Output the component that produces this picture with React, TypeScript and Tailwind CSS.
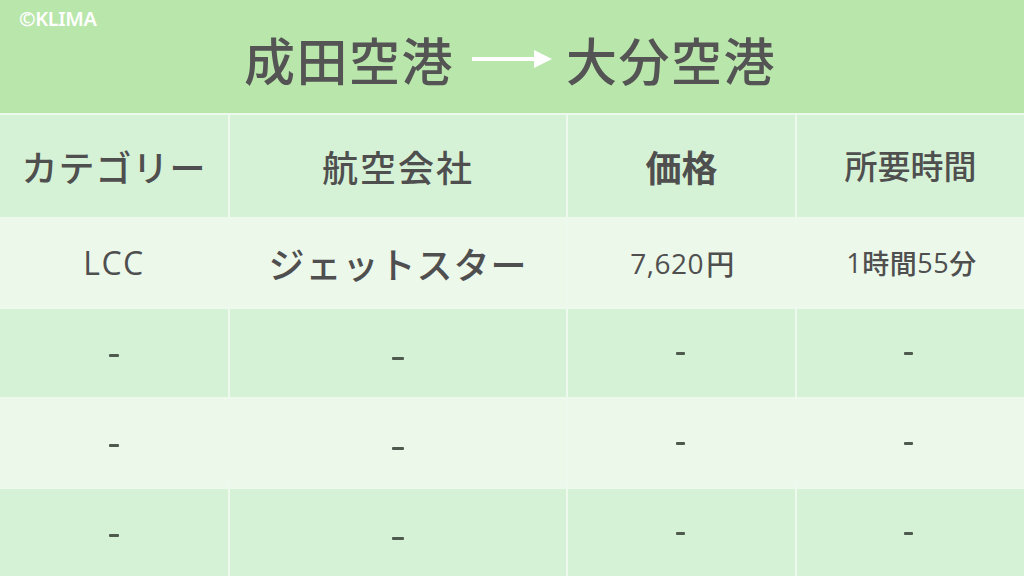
import React from "react";

const FONT = { fontFamily: '"Noto Sans CJK JP", "Noto Sans", sans-serif' };
const LATIN = { fontFamily: '"Open Sans", "Noto Sans CJK JP", sans-serif' };

function Cell({ children, bg, className = "" }: { children?: React.ReactNode; bg: string; className?: string }) {
  return (
    <div className={`flex items-center justify-center text-[#4f4f4f] ${bg} ${className}`}>{children}</div>
  );
}

function Dash({ w }: { w: string }) {
  return <div className={`h-[3px] ${w} bg-[#4f5a4f] rounded-[1px]`} />;
}

export default function App() {
  const head = "bg-[#d6f2d6]";
  const light = "bg-[#ecf8ea]";
  const rows = [head, light, head, light, head];
  return (
    <div className="w-[1024px] h-[576px] overflow-hidden flex flex-col bg-[#eef9ee]" style={FONT}>
      <div className="relative h-[113px] bg-[#b9e6ab] flex items-center justify-center shrink-0">
        <div className="absolute left-[19px] top-[4px] text-white text-[20px] font-semibold tracking-[-0.4px]" style={{ fontFamily: '"Noto Sans", sans-serif' }}>
          ©KLIMA
        </div>
        <div className="flex items-center mt-[6px] ml-[-4px] text-[#545454] text-[51px] font-medium tracking-[1.5px] leading-none">
          <span>成田空港</span>
          <svg width="82" height="20" viewBox="0 0 82 20" className="ml-[18px] mr-[12px] mt-[-2px]">
            <rect x="0" y="8" width="66" height="4" fill="#ffffff" />
            <polygon points="62,1 80,10 62,19" fill="#ffffff" />
          </svg>
          <span>大分空港</span>
        </div>
      </div>
      <div className="flex-1 grid grid-cols-[228px_336px_227px_227px] grid-rows-[102px_88px_88px_88px_88px] gap-[2px] pt-[2px]">
        <Cell bg={rows[0]} className="text-[36px] font-medium tracking-[1px]">カテゴリー</Cell>
        <Cell bg={rows[0]} className="text-[36px] font-medium tracking-[2px]">航空会社</Cell>
        <Cell bg={rows[0]} className="text-[36px] font-bold">価格</Cell>
        <Cell bg={rows[0]} className="text-[33px] font-medium">所要時間</Cell>

        <Cell bg={rows[1]} className="text-[32px] font-medium tracking-[1.5px]">
          <span style={LATIN}>LCC</span>
        </Cell>
        <Cell bg={rows[1]} className="text-[36px] font-medium tracking-[1px]">ジェットスター</Cell>
        <Cell bg={rows[1]} className="text-[28px] font-medium tracking-[0.5px] pl-[2px]">
          <span className="pr-[2px]" style={LATIN}>7,620</span>
          <span>円</span>
        </Cell>
        <Cell bg={rows[1]} className="text-[27px] font-medium pl-[2px] tracking-[0.5px]">
          <span style={LATIN}>1</span>
          <span>時間</span>
          <span style={LATIN}>55</span>
          <span>分</span>
        </Cell>

        {[2, 3, 4].map((r) => (
          <React.Fragment key={r}>
            <Cell bg={rows[r]}><div className="mt-[4px]"><Dash w="w-[10px]" /></div></Cell>
            <Cell bg={rows[r]}><div className="mt-[10px]"><Dash w="w-[12px]" /></div></Cell>
            <Cell bg={rows[r]}><div className="mt-[0px] ml-[-3px]"><Dash w="w-[9px]" /></div></Cell>
            <Cell bg={rows[r]}><div className="mt-[0px] ml-[-4px]"><Dash w="w-[9px]" /></div></Cell>
          </React.Fragment>
        ))}
      </div>
    </div>
  );
}
